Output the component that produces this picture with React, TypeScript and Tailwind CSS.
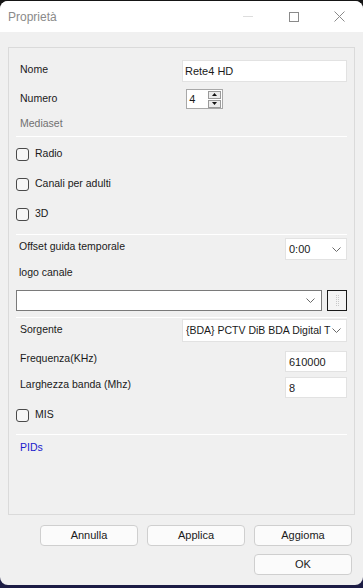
import React from 'react';

const font = { fontFamily: '"Liberation Sans", Arial, sans-serif' };

const Chevron = () => (
  <svg width="9" height="5" viewBox="0 0 9 5" className="shrink-0">
    <path d="M0.5 0.5 L4.5 4.5 L8.5 0.5" fill="none" stroke="#6a6a6a" strokeWidth="1" />
  </svg>
);

const Check = ({ label }: { label: string }) => (
  <div className="flex h-[30px] items-center pl-[7px]">
    <div className="h-[13px] w-[13px] rounded-[3px] border border-[#4a4a4a] bg-[#f7f7f7]" />
    <span className="ml-[6px] text-[10.5px] text-[#1a1a1a]">{label}</span>
  </div>
);

const Sep = ({ mt }: { mt: string }) => <div className={`${mt} mx-[7px] h-px bg-white`} />;

const Btn = ({ label }: { label: string }) => (
  <button className="flex h-[21px] w-[98px] items-center justify-center rounded-[4px] border border-[#cfcfcf] bg-[#fbfbfb] text-[11px] text-[#1a1a1a]">
    {label}
  </button>
);

export default function App() {
  return (
    <div className="h-[588px] w-[363px] bg-[linear-gradient(#151515,#1d1d45)] pt-px" style={font}>
      <div className="flex h-[584px] flex-col overflow-hidden rounded-[8px] bg-[#f0f0f0]">
        {/* title bar */}
        <div className="flex h-[31px] items-center bg-white pl-[8px]">
          <span className="text-[12px] text-[#8a8a8a]">Proprietà</span>
          <div className="ml-auto flex items-center">
            <div className="mr-[36px] h-px w-[10px] bg-[#dddddd]" />
            <div className="mr-[35px] h-[10px] w-[10px] border border-[#8a8a8a]" />
            <svg width="11" height="11" viewBox="0 0 11 11" className="mr-[18px]">
              <path d="M0.5 0.5 L10.5 10.5 M10.5 0.5 L0.5 10.5" stroke="#8a8a8a" strokeWidth="1" />
            </svg>
          </div>
        </div>

        {/* body */}
        <div className="px-[8px] pt-[15px]">
          <div className="flex h-[468px] flex-col border border-[#dadada] pt-[12px]">
            <div className="flex h-[22px] items-center pl-[11px] pr-[7px]">
              <span className="pb-[3px] text-[10.5px] text-[#1a1a1a]">Nome</span>
              <div className="ml-auto flex h-full w-[165px] items-center border border-[#e2e2e2] bg-white px-[2px] text-[11px] text-[#1a1a1a]">
                Rete4 HD
              </div>
            </div>

            <div className="mt-[7px] flex h-[20px] items-center pl-[11px] pr-[7px]">
              <span className="text-[10.5px] text-[#1a1a1a]">Numero</span>
              <div className="ml-[129px] flex h-full w-[37px] items-center border border-[#a8a8a8] bg-white pl-[2px] text-[11px] text-[#1a1a1a]">
                <span>4</span>
                <div className="ml-auto mr-px flex flex-col gap-px">
                  <div className="flex h-[8px] w-[13px] items-center justify-center border border-[#9a9a9a] bg-[#ececec]">
                    <svg width="5" height="3" viewBox="0 0 5 3"><path d="M0 3 L2.5 0 L5 3Z" fill="#111" /></svg>
                  </div>
                  <div className="flex h-[8px] w-[13px] items-center justify-center border border-[#9a9a9a] bg-[#ececec]">
                    <svg width="5" height="3" viewBox="0 0 5 3"><path d="M0 0 L2.5 3 L5 0Z" fill="#111" /></svg>
                  </div>
                </div>
              </div>
            </div>

            <div className="mt-[7px] flex h-[16px] items-center pl-[11px]">
              <span className="text-[10.5px] text-[#707070]">Mediaset</span>
            </div>

            <Sep mt="mt-[4px]" />
            <div className="mt-[2px]">
              <Check label="Radio" />
              <Check label="Canali per adulti" />
              <Check label="3D" />
            </div>
            <Sep mt="mt-[5px]" />

            <div className="mt-[3px] flex h-[22px] items-center pl-[10px] pr-[7px]">
              <span className="pb-[4px] text-[10.5px] text-[#1a1a1a]">Offset guida temporale</span>
              <div className="ml-auto flex h-full w-[62px] items-center border border-[#e2e2e2] bg-white pl-[3px] pr-[5px] text-[11px] text-[#1a1a1a]">
                <span>0:00</span>
                <span className="ml-auto"><Chevron /></span>
              </div>
            </div>

            <div className="mt-[3px] flex h-[20px] items-center pl-[10px]">
              <span className="text-[10.5px] text-[#1a1a1a]">logo canale</span>
            </div>

            <div className="mt-[7px] flex h-[21px] items-center pl-[7px] pr-[7px]">
              <div className="flex h-full w-[306px] items-center border border-[#7a7a7a] bg-white pr-[6px]">
                <span className="ml-auto"><Chevron /></span>
              </div>
              <div className="ml-auto flex h-full w-[20px] items-center justify-center border border-[#1a1a1a] bg-[#f4f4f4]">
                <div className="h-[11px] w-[3px] border border-dotted border-[#c8c8c8]" />
              </div>
            </div>

            <Sep mt="mt-[6px]" />

            <div className="mt-px flex h-[23px] items-center pl-[11px] pr-[7px]">
              <span className="pb-[2px] text-[10.5px] text-[#1a1a1a]">Sorgente</span>
              <div className="ml-auto flex h-full w-[165px] items-center border border-[#e2e2e2] bg-white pl-[3px] pr-[5px] text-[10.5px] text-[#1a1a1a]">
                <span className="w-[146px] overflow-hidden whitespace-nowrap">{'{BDA} PCTV DiB BDA Digital T'}</span>
                <span className="ml-auto"><Chevron /></span>
              </div>
            </div>

            <div className="mt-[9px] flex h-[21px] items-center pl-[11px] pr-[7px]">
              <span className="pb-[5px] text-[10.5px] text-[#1a1a1a]">Frequenza(KHz)</span>
              <div className="ml-auto flex h-full w-[62px] items-center border border-[#e2e2e2] bg-white pl-[3px] pt-px text-[11px] text-[#1a1a1a]">
                610000
              </div>
            </div>

            <div className="mt-[5px] flex h-[21px] items-center pl-[11px] pr-[7px]">
              <span className="pb-[5px] text-[10.5px] text-[#1a1a1a]">Larghezza banda (Mhz)</span>
              <div className="ml-auto flex h-full w-[62px] items-center border border-[#e2e2e2] bg-white pl-[3px] pt-px text-[11px] text-[#1a1a1a]">
                8
              </div>
            </div>

            <div className="mt-[2px]">
              <Check label="MIS" />
            </div>

            <Sep mt="mt-[4px]" />

            <div className="mt-[5px] flex h-[16px] items-center pl-[11px]">
              <span className="text-[10.5px] text-[#1a1acc]">PIDs</span>
            </div>
          </div>

          {/* buttons */}
          <div className="mt-[10px] flex justify-end gap-[9px] pr-[3px]">
            <Btn label="Annulla" />
            <Btn label="Applica" />
            <Btn label="Aggioma" />
          </div>
          <div className="mt-[8px] flex justify-end pr-[3px]">
            <Btn label="OK" />
          </div>
        </div>
      </div>
    </div>
  );
}
